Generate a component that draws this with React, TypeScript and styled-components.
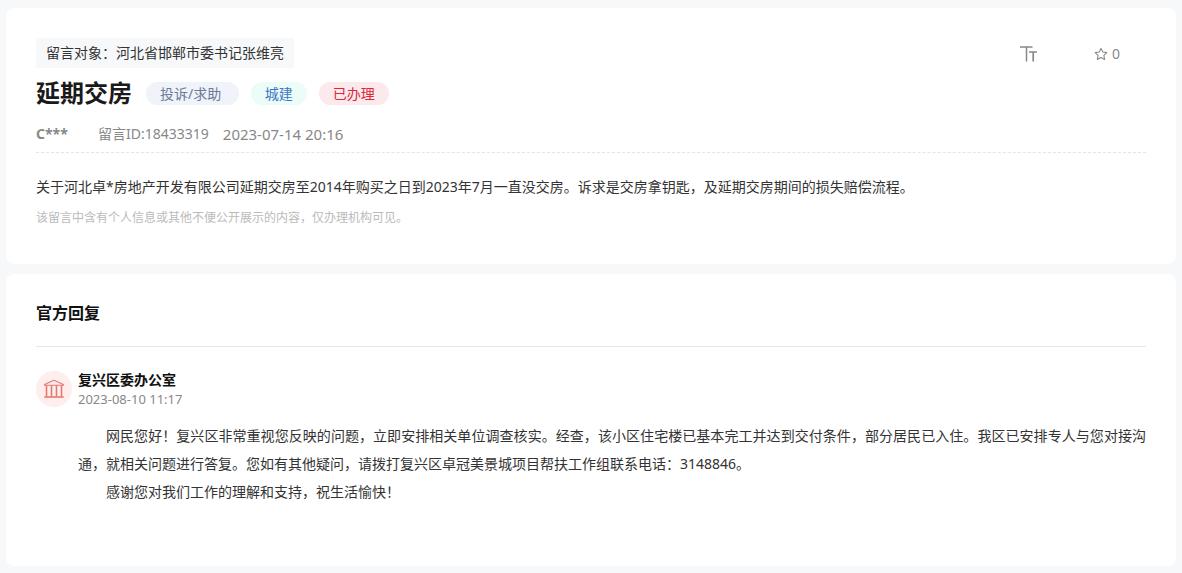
import React from "react";
import styled, { createGlobalStyle } from "styled-components";

const GlobalStyle = createGlobalStyle`
  * {
    box-sizing: border-box;
  }
  body {
    margin: 0;
    background: #f7f8fa;
    color: #333;
    font-family: "Noto Sans", "Noto Sans CJK SC", sans-serif;
    font-size: 14px;
  }
  h1, h2, h3, p {
    margin: 0;
  }
`;

const Page = styled.main`
  display: flex;
  flex-direction: column;
  gap: 10px;
  padding: 8px 6px;
`;

const Card = styled.section<{ $space: number }>`
  padding: 30px 30px ${(p) => p.$space}px;
  border-radius: 8px;
  background: #fff;
`;

const TopBar = styled.div`
  display: flex;
  align-items: flex-start;
  justify-content: space-between;
`;

const Recipient = styled.p`
  padding: 0 10px;
  border-radius: 2px;
  background: #f7f8fa;
  line-height: 30px;
`;

const Tools = styled.div`
  display: flex;
  align-items: center;
  gap: 56px;
  height: 32px;
  padding-right: 26px;
`;

const ToolButton = styled.button`
  display: flex;
  align-items: center;
  gap: 4px;
  padding: 0;
  border: 0;
  background: none;
  color: #888;
  font-family: inherit;
  font-size: 14px;
  line-height: 20px;
  cursor: pointer;
`;

const TitleRow = styled.div`
  display: flex;
  align-items: center;
  gap: 12px;
  margin-top: 8px;
`;

const Title = styled.h1`
  margin-right: 2px;
  color: #1a1a1a;
  font-size: 24px;
  font-weight: 700;
  line-height: 30px;
`;

const Tag = styled.span<{ $color: string; $fill: string }>`
  padding: 0 14px;
  border-radius: 12px;
  background: ${(p) => p.$fill};
  color: ${(p) => p.$color};
  line-height: 23px;
  white-space: pre;
`;

const Meta = styled.div`
  display: flex;
  gap: 14px;
  margin-top: 15px;
  padding-bottom: 7px;
  border-bottom: 1px dashed #e4e4e4;
  color: #888;
  line-height: 22px;
`;

const Author = styled.strong`
  width: 48px;
`;

const MessageTime = styled.time`
  font-size: 15px;
`;

const Message = styled.p`
  margin-top: 20px;
  line-height: 28px;
`;

const Notice = styled.p`
  margin-top: 7px;
  color: #bbb;
  font-size: 12px;
  line-height: 20px;
`;

const SectionTitle = styled.h2`
  padding-bottom: 23px;
  border-bottom: 1px solid #e6e6e6;
  color: #111;
  font-size: 16px;
  font-weight: 700;
  line-height: 19px;
`;

const Reply = styled.article`
  display: grid;
  grid-template-columns: 36px 1fr;
  column-gap: 6px;
  margin-top: 24px;
`;

const Avatar = styled.div`
  display: flex;
  align-items: center;
  justify-content: center;
  width: 36px;
  height: 36px;
  border-radius: 50%;
  background: #feeeee;
`;

const Office = styled.h3`
  color: #111;
  font-size: 14px;
  font-weight: 700;
  line-height: 17px;
`;

const ReplyTime = styled.time`
  display: block;
  color: #888;
  font-size: 13px;
  line-height: 22px;
`;

const ReplyText = styled.div`
  margin-top: 12px;
  line-height: 28px;
  text-align: justify;

  p {
    text-indent: 28px;
  }
`;

const TextSizeIcon = () => (
  <svg width="18" height="16" viewBox="0 0 18 16" fill="none" stroke="currentColor" aria-hidden="true">
    <path d="M0 1H12.5M6.5 1V15.5" strokeWidth="1.5" />
    <path d="M9 6H17M13.2 6V15.5" strokeWidth="1.7" />
  </svg>
);

const StarIcon = () => (
  <svg width="14" height="14" viewBox="0 0 14 14" fill="none" stroke="currentColor" strokeWidth="1.1" strokeLinejoin="round" aria-hidden="true">
    <path d="M7 1.4 8.8 5 12.8 5.6 9.9 8.4 10.6 12.5 7 10.6 3.4 12.5 4.1 8.4 1.2 5.6 5.2 5Z" />
  </svg>
);

const InstitutionIcon = () => (
  <svg width="20" height="20" viewBox="0 0 20 20" fill="none" stroke="#e5786f" strokeLinejoin="round" aria-hidden="true">
    <path d="M0.6 6.2V5.4L10 1.3 19.4 5.4V6.2Z" strokeWidth="1.1" />
    <path d="M2.5 6.2V17.5M7.5 6.2V17.5M12.5 6.2V17.5M17.5 6.2V17.5" strokeWidth="1.6" />
    <path d="M0.3 18H19.7" strokeWidth="1.6" />
  </svg>
);

export default function App() {
  return (
    <>
      <GlobalStyle />
      <Page>
        <Card $space={36}>
          <TopBar>
            <Recipient>留言对象：河北省邯郸市委书记张维亮</Recipient>
            <Tools>
              <ToolButton type="button" aria-label="字号">
                <TextSizeIcon />
              </ToolButton>
              <ToolButton type="button" aria-label="收藏 0">
                <StarIcon />0
              </ToolButton>
            </Tools>
          </TopBar>
          <TitleRow>
            <Title>延期交房</Title>
            <Tag $color="#6b7a99" $fill="#f0f3fa">{"投诉/求助 "}</Tag>
            <Tag $color="#3b76c4" $fill="#ebfcf9">城建</Tag>
            <Tag $color="#d9283c" $fill="#fbe9eb">已办理</Tag>
          </TitleRow>
          <Meta>
            <Author>C***</Author>
            <span>留言ID:18433319</span>
            <MessageTime dateTime="2023-07-14T20:16">2023-07-14 20:16</MessageTime>
          </Meta>
          <Message>
            关于河北卓*房地产开发有限公司延期交房至2014年购买之日到2023年7月一直没交房。诉求是交房拿钥匙，及延期交房期间的损失赔偿流程。
          </Message>
          <Notice>该留言中含有个人信息或其他不便公开展示的内容，仅办理机构可见。</Notice>
        </Card>
        <Card $space={60}>
          <SectionTitle>官方回复</SectionTitle>
          <Reply>
            <Avatar>
              <InstitutionIcon />
            </Avatar>
            <div>
              <Office>复兴区委办公室</Office>
              <ReplyTime dateTime="2023-08-10T11:17">2023-08-10 11:17</ReplyTime>
              <ReplyText>
                <p>
                  网民您好！复兴区非常重视您反映的问题，立即安排相关单位调查核实。经查，该小区住宅楼已基本完工并达到交付条件，部分居民已入住。我区已安排专人与您对接沟通，就相关问题进行答复。您如有其他疑问，请拨打复兴区卓冠美景城项目帮扶工作组联系电话：3148846。
                </p>
                <p>感谢您对我们工作的理解和支持，祝生活愉快！</p>
              </ReplyText>
            </div>
          </Reply>
        </Card>
      </Page>
    </>
  );
}
